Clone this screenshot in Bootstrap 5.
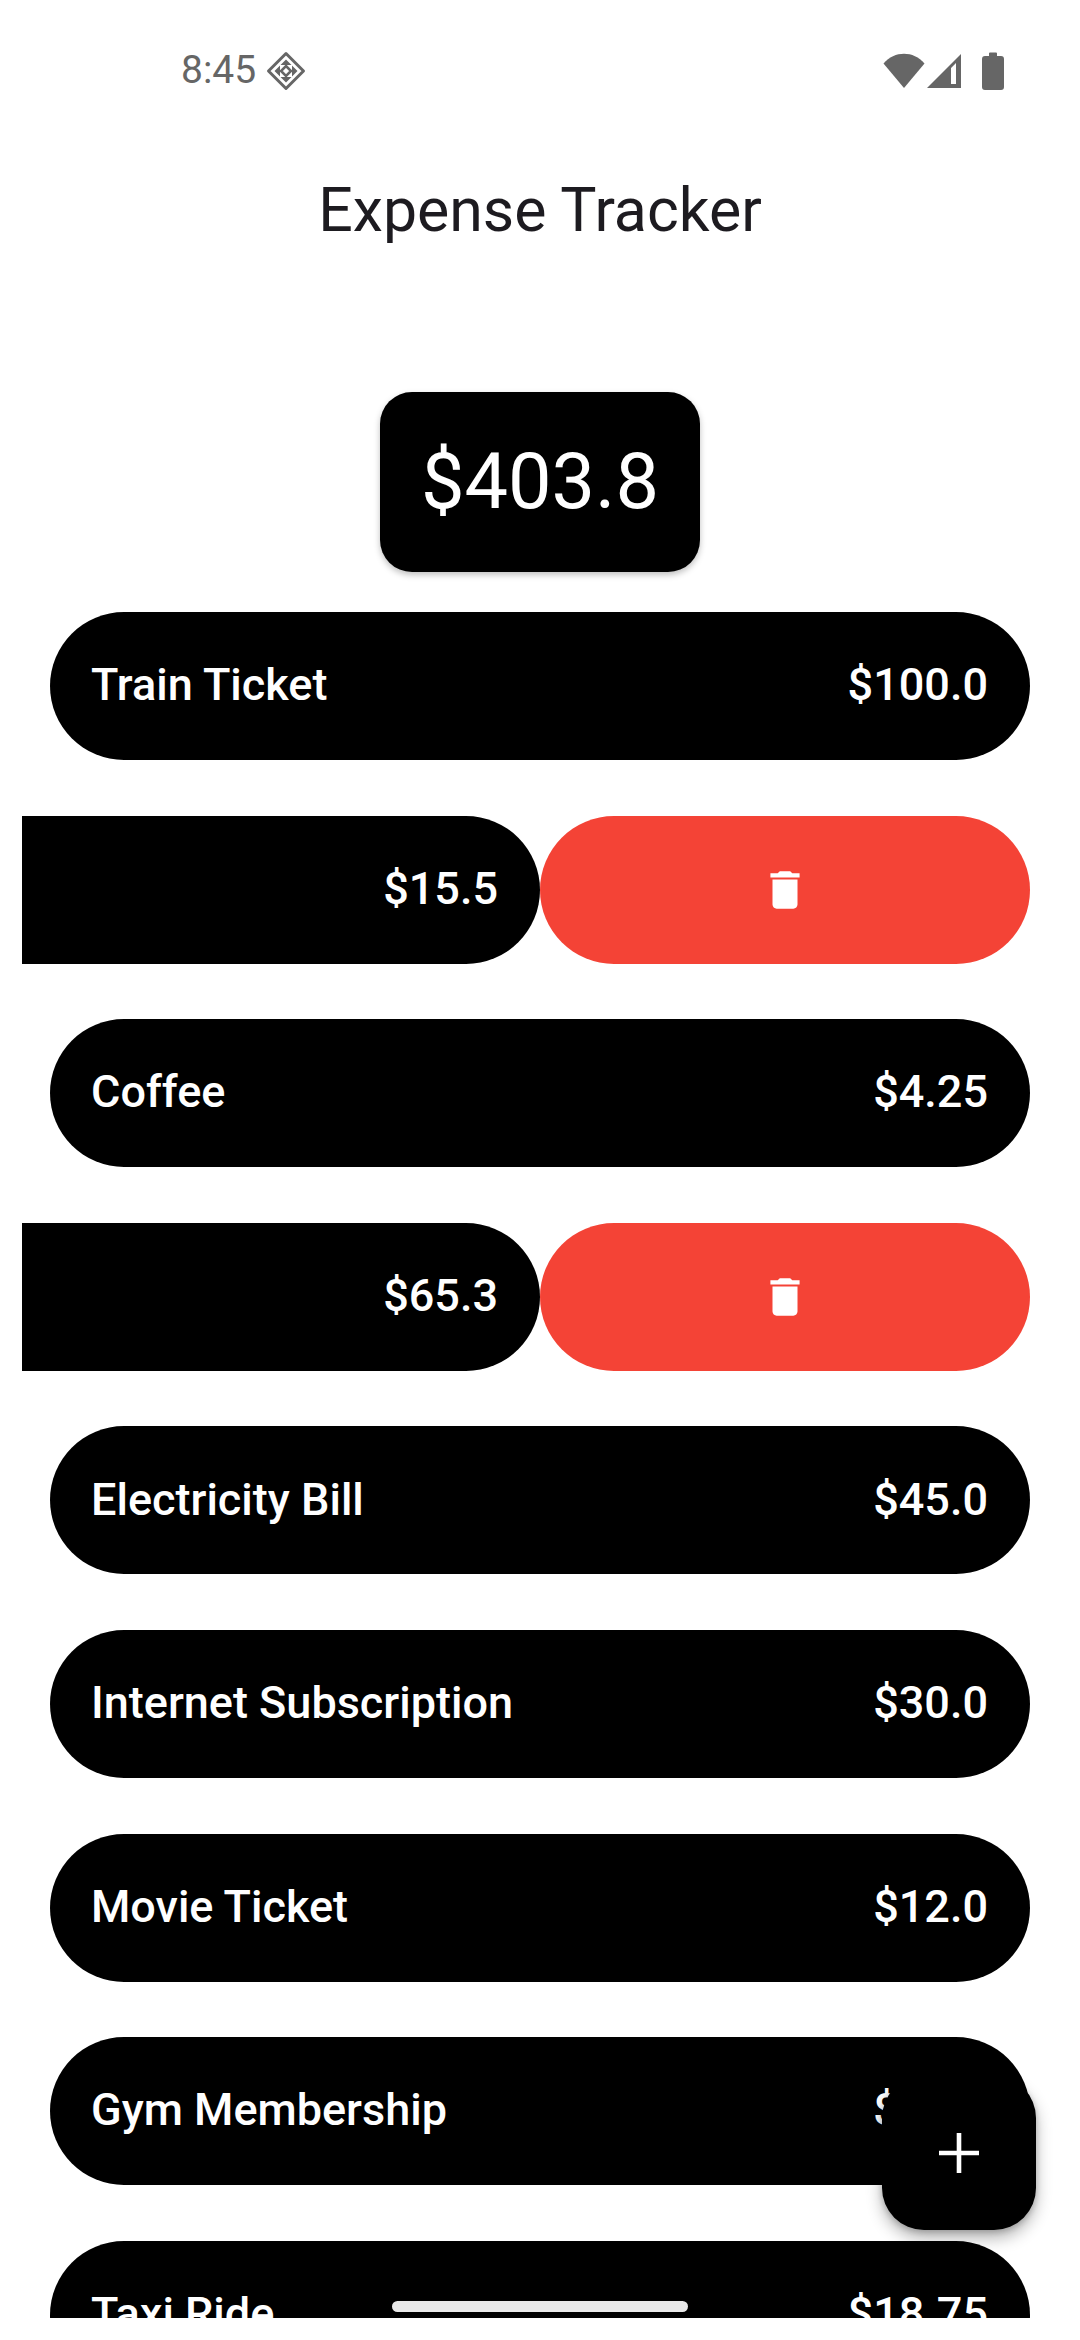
<!DOCTYPE html>
<html lang="en">

<head>
    <meta charset="UTF-8" />
    <meta name="viewport" content="width=device-width, initial-scale=1" />
    <title>Expense Tracker</title>
    <link href="https://cdn.jsdelivr.net/npm/bootstrap@5.3.2/dist/css/bootstrap.min.css" rel="stylesheet" />
    <style>
        body {
            background-color: #fff;
            font-family: Roboto, "Liberation Sans", sans-serif;
            overflow: hidden;
        }

        .screen {
            height: 2318px;
            overflow: hidden;
        }

        .status-bar {
            height: 110px;
            padding: 31px 76px 0 181px;
            color: #666;
        }

        .status-time {
            font-size: 39px;
            line-height: 1;
        }

        .sim-icon {
            margin-left: 10px;
        }

        .signal-icon {
            margin: 0 20px 0 1px;
        }

        .app-title {
            height: 170px;
            padding-top: 33px;
            margin: 0;
            font-size: 60.8px;
            font-weight: 400;
            color: #1d1b20;
        }

        .total-box {
            width: 320px;
            height: 180px;
            margin: 112px auto 40px;
            border-radius: 32px;
            font-size: 77.500px;
            box-shadow: 0 3px 6px rgba(0, 0, 0, 0.25);
        }

        .expense-list {
            gap: 55.6px;
        }

        .expense-row {
            height: 148px;
            margin: 0 50px;
            padding: 0 42px 0 41px;
            border-radius: 74px;
            font-size: 45px;
            font-weight: 500;
        }

        .expense-row span,
        .swiped-main span {
            position: relative;
            top: -1px;
        }

        .swiped-row {
            height: 148px;
            margin: 0 50px 0 22px;
        }

        .swiped-main {
            width: 518px;
            padding-right: 42px;
            border-radius: 0 74px 74px 0;
            font-size: 45px;
            font-weight: 500;
        }

        .swiped-delete {
            background-color: #f44336;
            border-radius: 74px;
        }

        .add-fab {
            position: fixed;
            left: 882px;
            top: 2076px;
            width: 154px;
            height: 154px;
            border-radius: 42px;
            box-shadow: 0 8px 16px rgba(0, 0, 0, 0.3), 0 2px 6px rgba(0, 0, 0, 0.2);
        }

        .gesture-pill {
            position: fixed;
            left: 392px;
            top: 2301px;
            width: 296px;
            height: 11px;
            border-radius: 6px;
            background-color: #e9e9e9;
        }
    </style>
</head>

<body>
    <div class="screen">
        <!-- status bar -->
        <div class="status-bar d-flex align-items-center justify-content-between">
            <div class="d-flex align-items-center">
                <span class="status-time">8:45</span>
                <svg class="sim-icon" width="40" height="40" viewBox="0 0 40 40" fill="none">
                    <path d="M20 2.5 37.5 20 20 37.5 2.500 20Z" stroke="#666" stroke-width="3" stroke-linejoin="round" />
                    <path d="M20 8.5 25.5 14H14.5ZM20 31.5 14.5 26H25.5ZM8.5 20 14 14.5V25.5ZM31.5 20 26 25.5V14.5Z" fill="#666" />
                    <path d="M20 15 25 20 20 25 15 20Z" stroke="#666" stroke-width="2.5" />
                </svg>
            </div>
            <div class="d-flex align-items-center">
                <svg width="42" height="36" viewBox="0 0 42 36">
                    <path d="M0.5 10.5C11.5 -2.5 30.5 -2.5 41.5 10.500L21 35Z" fill="#666" />
                </svg>
                <svg class="signal-icon" width="36" height="36" viewBox="0 0 36 36">
                    <path fill-rule="evenodd" d="M35 1V35H1ZM30 10 25 15V31H30Z" fill="#666" />
                </svg>
                <svg width="22" height="38" viewBox="0 0 22 38">
                    <path d="M7 1.5a1 1 0 0 1 1-1h6a1 1 0 0 1 1 1V4h4a3 3 0 0 1 3 3v28a3 3 0 0 1-3 3H3a3 3 0 0 1-3-3V7a3 3 0 0 1 3-3h4Z" fill="#666" />
                </svg>
            </div>
        </div>

        <h1 class="app-title d-flex align-items-center justify-content-center">Expense Tracker</h1>

        <div class="total-box bg-black text-white d-flex align-items-center justify-content-center">$403.8</div>

        <div class="expense-list d-flex flex-column">
            <div class="expense-row bg-black text-white d-flex align-items-center justify-content-between">
                <span>Train Ticket</span><span>$100.0</span>
            </div>

            <div class="swiped-row d-flex">
                <div class="swiped-main bg-black text-white d-flex align-items-center justify-content-end">
                    <span>$15.5</span>
                </div>
                <div class="swiped-delete flex-grow-1 d-flex align-items-center justify-content-center">
                    <svg width="50" height="50" viewBox="0 0 24 24" fill="#fff">
                        <path d="M6 19c0 1.1.9 2 2 2h8c1.100 0 2-.9 2-2V7H6v12zM19 4h-3.500l-1-1h-5l-1 1H5v2h14V4z" />
                    </svg>
                </div>
            </div>

            <div class="expense-row bg-black text-white d-flex align-items-center justify-content-between">
                <span>Coffee</span><span>$4.25</span>
            </div>

            <div class="swiped-row d-flex">
                <div class="swiped-main bg-black text-white d-flex align-items-center justify-content-end">
                    <span>$65.3</span>
                </div>
                <div class="swiped-delete flex-grow-1 d-flex align-items-center justify-content-center">
                    <svg width="50" height="50" viewBox="0 0 24 24" fill="#fff">
                        <path d="M6 19c0 1.1.9 2 2 2h8c1.100 0 2-.9 2-2V7H6v12zM19 4h-3.500l-1-1h-5l-1 1H5v2h14V4z" />
                    </svg>
                </div>
            </div>

            <div class="expense-row bg-black text-white d-flex align-items-center justify-content-between">
                <span>Electricity Bill</span><span>$45.0</span>
            </div>
            <div class="expense-row bg-black text-white d-flex align-items-center justify-content-between">
                <span>Internet Subscription</span><span>$30.0</span>
            </div>
            <div class="expense-row bg-black text-white d-flex align-items-center justify-content-between">
                <span>Movie Ticket</span><span>$12.0</span>
            </div>
            <div class="expense-row bg-black text-white d-flex align-items-center justify-content-between">
                <span>Gym Membership</span><span>$50.0</span>
            </div>
            <div class="expense-row bg-black text-white d-flex align-items-center justify-content-between">
                <span>Taxi Ride</span><span>$18.75</span>
            </div>
        </div>
    </div>

    <button type="button" class="add-fab btn bg-black border-0 d-flex align-items-center justify-content-center p-0" aria-label="Add">
        <svg width="40" height="40" viewBox="0 0 40 40" fill="#fff">
            <path d="M17.700 0h4.600v17.700H40v4.600H22.300V40h-4.600V22.300H0v-4.600h17.700Z" />
        </svg>
    </button>
    <div class="gesture-pill"></div>

    <script src="https://cdn.jsdelivr.net/npm/bootstrap@5.3.2/dist/js/bootstrap.bundle.min.js"></script>
</body>

</html>
